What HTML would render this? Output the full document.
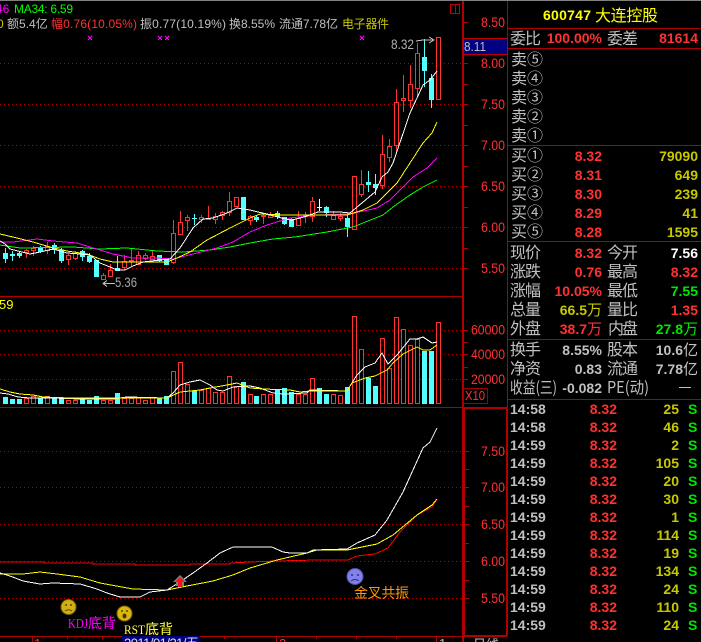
<!DOCTYPE html>
<html><head><meta charset="utf-8"><style>
html,body{margin:0;padding:0;background:#000;width:701px;height:642px;overflow:hidden}
svg{display:block;position:absolute;left:0;top:0}
text{font-family:"Liberation Sans","WenQuanYi Zen Hei","Noto Sans CJK SC",sans-serif}
.cj{font-family:"WenQuanYi Zen Hei","Noto Sans CJK SC",sans-serif;font-size:16px;fill:#c0c0c0}
.n{font-size:14px;font-weight:bold;text-anchor:end}
.ax{font-size:13.5px;fill:#ff3232;text-anchor:end}
.h{font-size:12px}
.r{fill:#ff3232}.g{fill:#00e600}.y{fill:#c8c800}.w{fill:#c0c0c0}
.tm{font-size:14px;font-weight:bold;fill:#c0c0c0}
</style></head><body>
<svg width="701" height="642" viewBox="0 0 701 642" xmlns="http://www.w3.org/2000/svg" shape-rendering="crispEdges">
<rect width="701" height="642" fill="#000"/>
<rect width="701" height="1" fill="#808080"/>

<!-- dotted grid -->
<path fill="none" stroke="#c00000" stroke-width="1" stroke-dasharray="1 3" d="M0 63.5H462M0 104.5H462M0 145.5H462M0 186.5H462M0 227.5H462M0 268.5H462M0 330.5H462M0 354.5H462M0 379.5H462M0 451.5H462M0 487.5H462M0 524.5H462M0 561.5H462M0 598.5H462"/>

<!-- frame -->
<path fill="none" stroke="#b00000" stroke-width="1" d="M0 296.5H462M0 407.5H508M0 636.5H507M464.5 408.5H506.5V635.5H464.5z"/>
<path fill="none" stroke="#b00000" stroke-width="2" d="M463 1V642"/>
<path fill="none" stroke="#b00000" stroke-width="1" d="M507.5 1V636M508 28.5H701M508 48.5H701M508 145.5H701M508 241.5H701M508 339.5H701M508 399.5H701"/>
<!-- axis ticks -->
<path fill="none" stroke="#b00000" stroke-width="1" d="M464 22.5h4M464 43.5h4M464 63.5h4M464 84.5h4M464 104.5h4M464 125.5h4M464 145.5h4M464 166.5h4M464 186.5h4M464 207.5h4M464 227.5h4M464 248.5h4M464 268.5h4M464 330.5h4M464 342.5h4M464 354.5h4M464 367.5h4M464 379.5h4M465 451.5h4M465 469.5h4M465 487.5h4M465 506.5h4M465 524.5h4M465 543.5h4M465 561.5h4M465 580.5h4M465 598.5h4M32.5 636v6M67.5 636v3M102.5 636v3M224.5 636v3M276.5 636v6M316.5 636v3M356.5 636v3M396.5 636v3M436.5 636v6"/>
<!-- window icon -->
<path fill="none" stroke="#c00000" d="M450.5 4.5h9v9h-9zM455.5 4.5v9"/>

<!-- main candles: wicks -->
<path fill="none" stroke="#ff3232" d="M26.5 249V258M33.5 246V256M47.5 242V254M68.5 254V265M75.5 251V260M103.5 273V279M110.5 264V277M124.5 255V270M131.5 249V266M138.5 251V265M145.5 253V260M152.5 251V260M173.5 220V264M180.5 211V235M187.5 215V231M201.5 215V223M208.5 206V219M215.5 213V224M222.5 211V220M229.5 192V216M250.5 215V225M263.5 213V224M270.5 212V218M298.5 211V226M305.5 212V223M312.5 197V222M333.5 211V220M340.5 213V221M361.5 170V197M382.5 135V189M389.5 139V162M396.5 89V153M403.5 75V112M410.5 65V108M417.5 43V97"/>
<path fill="#000" stroke="#ff3232" d="M24.5 250.5h4V252.5h-4zM31.5 248.5h4V250.5h-4zM45.5 246.5h4V250.5h-4zM66.5 255.5h4V259.5h-4zM73.5 253.5h4V258.5h-4zM101.5 275.5h4V279.5h-4zM108.5 270.5h4V276.5h-4zM122.5 261.5h4V267.5h-4zM129.5 260.5h4V261.5h-4zM136.5 255.5h4V264.5h-4zM143.5 255.5h4V258.5h-4zM150.5 256.5h4V259.5h-4zM171.5 233.5h4V262.5h-4zM178.5 222.5h4V234.5h-4zM185.5 217.5h4V220.5h-4zM199.5 217.5h4V219.5h-4zM206.5 218.5h4V219.5h-4zM213.5 216.5h4V219.5h-4zM220.5 212.5h4V215.5h-4zM227.5 201.5h4V212.5h-4zM234.5 197.5h4V206.5h-4zM248.5 216.5h4V220.5h-4zM261.5 215.5h4V216.5h-4zM268.5 215.5h4V217.5h-4zM296.5 218.5h4V225.5h-4zM303.5 215.5h4V216.5h-4zM310.5 201.5h4V216.5h-4zM331.5 215.5h4V219.5h-4zM338.5 216.5h4V218.5h-4zM352.5 176.5h4V229.5h-4zM359.5 184.5h4V194.5h-4zM380.5 154.5h4V185.5h-4zM387.5 146.5h4V157.5h-4zM394.5 102.5h4V145.5h-4zM401.5 98.5h4V100.5h-4zM408.5 84.5h4V100.5h-4zM415.5 53.5h4V88.5h-4zM436.5 37.5h4V99.5h-4z"/>
<path fill="none" stroke="#54ffff" d="M5.5 248V263M12.5 251V261M19.5 251V258M40.5 246V253M54.5 243V254M61.5 248V263M82.5 250V261M89.5 253V263M117.5 256V271M159.5 255V262M166.5 258V265M194.5 214V225M256.5 215V222M277.5 211V219M284.5 217V225M291.5 218V227M326.5 206V217M347.5 213V237M368.5 171V192M375.5 174V195M424.5 39V87M431.5 74V108"/>
<path fill="#54ffff" d="M3 253h5v6h-5zM10 254h5v2h-5zM17 253h5v3h-5zM38 247h5v5h-5zM52 245h5v5h-5zM59 250h5v11h-5zM80 251h5v6h-5zM87 256h5v6h-5zM94 260h5v17h-5zM115 268h5v3h-5zM157 255h5v6h-5zM164 259h5v6h-5zM192 218h5v1h-5zM241 197h5v23h-5zM254 217h5v3h-5zM275 213h5v4h-5zM282 217h5v7h-5zM289 219h5v8h-5zM324 207h5v6h-5zM345 218h5v9h-5zM366 182h5v3h-5zM373 184h5v4h-5zM422 57h5v14h-5zM429 78h5v22h-5z"/>
<path fill="none" stroke="#fff" d="M319.5 199V211M317 207.5h5"/>

<!-- main MAs -->
<g fill="none" stroke-width="1">
<polyline stroke="#00ff00" points="0,245 20,248 73,247 100,249 127,248 157,251 183,252 210,250 230,247 250,243 273,239 295,237 327,232 353,227 383,215 393,207 410,195 423,187 437,180"/>
<polyline stroke="#ff00ff" points="0,242 13,242 37,239 53,241 77,243 93,248 113,254 133,258 157,258 173,259 193,254 217,248 233,242 250,232 267,225 290,218 317,215 350,214 377,208 390,200 413,177 427,168 437,158"/>
<polyline stroke="#ffff00" points="0,234 17,238 33,242 50,247 67,251 87,254 100,259 113,262 140,262 167,262 177,258 190,252 207,240 230,228 250,218 260,214 283,215 347,215 363,210 377,203 397,183 410,163 423,143 432,133 437,122"/>
<polyline stroke="#ffffff" points="0,241 5,244 10,249 30,254 40,252 53,249 67,253 80,254 90,255 100,263 110,267 117,270 125,270 133,266 143,262 160,260 170,259 180,248 193,228 203,219 213,218 227,213 237,208 250,210 258,212 267,214 285,219 292,220 304,217 318,212 340,212 350,213 375,192 382,177 388,172 393,163 410,113 423,85 430,80 437,71"/>
<path stroke="#c0c0c0" d="M416 41L423 40H434M429 37l5 3-5 3"/>
<path stroke="#c0c0c0" d="M103 283.5H115M107 280.5l-4 3 4 3"/>
</g>
<path fill="none" stroke="#ff00ff" d="M88 36l4 4M92 36l-4 4M158 36l4 4M162 36l-4 4M165 36l4 4M169 36l-4 4M360 36l4 4M364 36l-4 4"/>

<!-- volume -->
<path fill="#000" stroke="#ff3232" d="M24.5 398.5h4V403.5h-4zM31.5 396.5h4V403.5h-4zM45.5 396.5h4V403.5h-4zM66.5 400.5h4V403.5h-4zM73.5 400.5h4V403.5h-4zM101.5 400.5h4V403.5h-4zM108.5 400.5h4V403.5h-4zM122.5 398.5h4V403.5h-4zM129.5 398.5h4V403.5h-4zM136.5 397.5h4V403.5h-4zM143.5 400.5h4V403.5h-4zM150.5 397.5h4V403.5h-4zM171.5 371.5h4V403.5h-4zM178.5 362.5h4V403.5h-4zM185.5 384.5h4V403.5h-4zM199.5 390.5h4V403.5h-4zM206.5 388.5h4V403.5h-4zM213.5 392.5h4V403.5h-4zM220.5 392.5h4V403.5h-4zM227.5 376.5h4V403.5h-4zM234.5 386.5h4V403.5h-4zM248.5 394.5h4V403.5h-4zM261.5 394.5h4V403.5h-4zM268.5 394.5h4V403.5h-4zM296.5 394.5h4V403.5h-4zM303.5 394.5h4V403.5h-4zM310.5 378.5h4V403.5h-4zM331.5 394.5h4V403.5h-4zM338.5 395.5h4V403.5h-4zM352.5 316.5h4V403.5h-4zM359.5 349.5h4V403.5h-4zM380.5 338.5h4V403.5h-4zM387.5 368.5h4V403.5h-4zM394.5 317.5h4V403.5h-4zM401.5 329.5h4V403.5h-4zM408.5 345.5h4V403.5h-4zM415.5 339.5h4V403.5h-4zM436.5 322.5h4V403.5h-4z"/>
<path fill="#54ffff" d="M3 397h5V404h-5zM10 399h5V404h-5zM17 399h5V404h-5zM38 398h5V404h-5zM52 398h5V404h-5zM59 398h5V404h-5zM80 399h5V404h-5zM87 400h5V404h-5zM94 396h5V404h-5zM115 393h5V404h-5zM157 398h5V404h-5zM164 396h5V404h-5zM192 391h5V404h-5zM241 382h5V404h-5zM254 396h5V404h-5zM275 390h5V404h-5zM282 388h5V404h-5zM289 392h5V404h-5zM317 388h5V404h-5zM324 394h5V404h-5zM345 387h5V404h-5zM366 378h5V404h-5zM373 386h5V404h-5zM422 351h5V404h-5zM429 351h5V404h-5z"/>
<g fill="none">
<polyline stroke="#fff" points="0,393 8,394 18,397 30,398 43,398 53,398 80,399 113,399 127,397 167,398 173,393 180,385 190,382 200,380 210,385 217,390 223,391 233,387 250,386 260,388 273,393 283,394 307,393 310,390 347,391 350,386 357,375 365,367 375,363 382,353 388,364 397,355 410,339 417,339 423,337 432,343 437,342"/>
<polyline stroke="#ffff00" points="0,389 10,392 20,394 33,395 43,397 70,398 167,398 180,392 200,390 210,388 227,385 237,383 250,388 263,389 290,390 300,392 310,391 347,391 352,383 365,378 375,376 387,370 393,363 403,354 417,347 423,350 430,350 437,345"/>
</g>

<!-- bottom indicator -->
<g fill="none">
<polyline stroke="#ff0000" points="0,562 44,562 44,563 93,563 93,564 135,564 135,565 190,565 190,564 230,564 230,563 250,562 277,561 317,560 348,560 357,556 375,554 388,548 400,532 417,515 432,507 437,499"/>
<polyline stroke="#ffff00" points="0,574 23,574 40,572 57,574 80,577 100,583 133,589 167,590 187,586 213,581 233,575 250,568 277,560 307,553 317,550 347,550 377,544 393,535 417,515 432,505 437,499"/>
<polyline stroke="#ffffff" points="0,573 10,576 23,581 40,584 53,583 80,584 97,589 107,593 120,597 140,597 150,592 167,590 180,582 193,573 207,563 220,553 233,547 272,547 283,552 290,553 307,553 313,550 347,549 357,543 375,535 387,520 403,492 423,448 430,442 437,428"/>
</g>

<!-- arrow marker -->
<g shape-rendering="auto">
<path fill="#808080" d="M180 575l7 7h-3v4h-8v-4h-3z"/>
<path fill="#ff1010" d="M180 577l5 5h-3v5h-4v-5h-3z"/>
<!-- faces -->
<circle cx="68.5" cy="607" r="7.5" fill="#d0b010" stroke="#806000"/>
<circle cx="66" cy="605" r="1" fill="#604000"/><circle cx="71" cy="605" r="1" fill="#604000"/>
<path d="M65 611q3.500-2.500 7 0" fill="none" stroke="#604000"/>
<circle cx="124.500" cy="613.500" r="7.500" fill="#d8b810" stroke="#806000"/>
<circle cx="122" cy="611" r="1" fill="#604000"/><circle cx="127" cy="611" r="1" fill="#604000"/>
<ellipse cx="124.500" cy="616" rx="2" ry="2.500" fill="#503000"/>
<circle cx="355" cy="576.500" r="8" fill="#8080f0" stroke="#5050a0"/>
<circle cx="352" cy="575" r="1" fill="#303060"/><circle cx="358" cy="575" r="1" fill="#303060"/>
<path d="M351 581q4-3 8 0" fill="none" stroke="#303060"/>
</g>

<!-- top header -->
<text x="-4" y="13" class="h" fill="#ff00ff">46</text>
<text x="14" y="13" class="h" fill="#00ff00" textLength="59">MA34: 6.59</text>
<text x="-3" y="28" class="h" fill="#c8c800">0</text>
<text x="7" y="28" class="h" fill="#c0c0c0">额<tspan>5.4</tspan>亿</text>
<text x="51" y="28" class="h" fill="#ff3232" textLength="86">幅0.76(10.05%)</text>
<text x="140" y="28" class="h" fill="#c0c0c0" textLength="86">振0.77(10.19%)</text>
<text x="229" y="28" class="h" fill="#c0c0c0" textLength="46">换8.55%</text>
<text x="279" y="28" class="h" fill="#c0c0c0" textLength="59">流通7.78亿</text>
<text x="342" y="28" class="h" fill="#c8c800" textLength="47">电子器件</text>

<text x="391" y="49" font-size="13.500" fill="#b0b0b0" textLength="23" lengthAdjust="spacingAndGlyphs">8.32</text>
<text x="115" y="287" font-size="14" fill="#a8a8a8" textLength="22" lengthAdjust="spacingAndGlyphs">5.36</text>
<text x="-1" y="309" font-size="13" fill="#ffff00">59</text>

<!-- axis -->
<text x="505" y="27" class="ax" textLength="24" lengthAdjust="spacingAndGlyphs">8.50</text>
<text x="505" y="68" class="ax" textLength="24" lengthAdjust="spacingAndGlyphs">8.00</text>
<text x="505" y="109" class="ax" textLength="24" lengthAdjust="spacingAndGlyphs">7.50</text>
<text x="505" y="150" class="ax" textLength="24" lengthAdjust="spacingAndGlyphs">7.00</text>
<text x="505" y="191" class="ax" textLength="24" lengthAdjust="spacingAndGlyphs">6.50</text>
<text x="505" y="232" class="ax" textLength="24" lengthAdjust="spacingAndGlyphs">6.00</text>
<text x="505" y="273" class="ax" textLength="24" lengthAdjust="spacingAndGlyphs">5.50</text>
<text x="505" y="334.500" class="ax" textLength="34" lengthAdjust="spacingAndGlyphs">60000</text>
<text x="505" y="359" class="ax" textLength="34" lengthAdjust="spacingAndGlyphs">40000</text>
<text x="505" y="384" class="ax" textLength="34" lengthAdjust="spacingAndGlyphs">20000</text>
<text x="505" y="456" class="ax" textLength="24" lengthAdjust="spacingAndGlyphs">7.50</text>
<text x="505" y="492" class="ax" textLength="24" lengthAdjust="spacingAndGlyphs">7.00</text>
<text x="505" y="529" class="ax" textLength="24" lengthAdjust="spacingAndGlyphs">6.50</text>
<text x="505" y="566" class="ax" textLength="24" lengthAdjust="spacingAndGlyphs">6.00</text>
<text x="505" y="603" class="ax" textLength="24" lengthAdjust="spacingAndGlyphs">5.50</text>
<rect x="463.500" y="38.500" width="44" height="16" fill="#000080" stroke="#c00000"/>
<text x="464" y="51" font-size="13" fill="#c0c0c0" textLength="22" lengthAdjust="spacingAndGlyphs">8.11</text>
<rect x="463.500" y="388.500" width="24" height="15" fill="#000" stroke="#a00000"/>
<text x="465" y="400" font-size="13" fill="#ff3232" textLength="20" lengthAdjust="spacingAndGlyphs">X10</text>

<!-- signal labels -->
<text x="68" y="628" style="font-family:'Liberation Serif',serif" font-size="14" fill="#ff00ff" textLength="20" lengthAdjust="spacingAndGlyphs">KDJ</text>
<text x="88" y="628" class="cj" style="fill:#ff00ff;font-size:14px">底背</text>
<text x="124" y="634" style="font-family:'Liberation Serif',serif" font-size="13" fill="#ffff40" textLength="21" lengthAdjust="spacingAndGlyphs">RST</text>
<text x="145" y="634" class="cj" style="fill:#ffff40;font-size:14px">底背</text>
<text x="354" y="598" class="cj" style="fill:#ff9900;font-size:14px" textLength="55">金叉共振</text>

<!-- bottom strip -->
<rect x="122.500" y="636.500" width="77" height="8" fill="#000080" stroke="#000080"/>
<text x="124" y="647.500" font-size="13" fill="#e0e0e0" textLength="75">2011/01/21/五</text>
<text x="473" y="649" class="cj" style="font-size:13px">日线</text>
<text x="34" y="648" font-size="13" fill="#ff3232">1</text>
<text x="279" y="648" font-size="13" fill="#ff3232">2</text>
<text x="439" y="648" font-size="13" fill="#c0c0c0">1</text>

<!-- right panel -->
<text x="543" y="20" font-size="14" font-weight="bold" fill="#ffff00" textLength="48">600747</text>
<text x="595" y="21" class="cj" style="fill:#ffff00;font-size:16px" textLength="63">大连控股</text>

<text x="510" y="44" class="cj" textLength="31">委比</text>
<text x="602" y="43" class="n r">100.00%</text>
<text x="607" y="44" class="cj" textLength="31">委差</text>
<text x="698" y="43" class="n r">81614</text>

<text x="511" y="65" class="cj">卖⑤</text>
<text x="511" y="84" class="cj">卖④</text>
<text x="511" y="103" class="cj">卖③</text>
<text x="511" y="122" class="cj">卖②</text>
<text x="511" y="141" class="cj">卖①</text>
<text x="511" y="161" class="cj">买①</text>
<text x="511" y="180" class="cj">买②</text>
<text x="511" y="199" class="cj">买③</text>
<text x="511" y="218" class="cj">买④</text>
<text x="511" y="237" class="cj">买⑤</text>
<text x="602" y="161" class="n r">8.32</text><text x="698" y="161" class="n y">79090</text>
<text x="602" y="180" class="n r">8.31</text><text x="698" y="180" class="n y">649</text>
<text x="602" y="199" class="n r">8.30</text><text x="698" y="199" class="n y">239</text>
<text x="602" y="218" class="n r">8.29</text><text x="698" y="218" class="n y">41</text>
<text x="602" y="237" class="n r">8.28</text><text x="698" y="237" class="n y">1595</text>

<text x="510" y="258" class="cj" textLength="31">现价</text><text x="602" y="258" class="n r">8.32</text>
<text x="607" y="258" class="cj" textLength="31">今开</text><text x="698" y="258" class="n" fill="#fff">7.56</text>
<text x="510" y="277" class="cj" textLength="31">涨跌</text><text x="602" y="277" class="n r">0.76</text>
<text x="607" y="277" class="cj" textLength="31">最高</text><text x="698" y="277" class="n r">8.32</text>
<text x="510" y="296" class="cj" textLength="31">涨幅</text><text x="602" y="296" class="n r">10.05%</text>
<text x="607" y="296" class="cj" textLength="31">最低</text><text x="698" y="296" class="n g">7.55</text>
<text x="510" y="315" class="cj" textLength="31">总量</text><text x="587" y="315" class="n y">66.5</text><text x="587" y="315" class="cj" style="fill:#c8c800;font-size:15px">万</text>
<text x="607" y="315" class="cj" textLength="31">量比</text><text x="698" y="315" class="n r">1.35</text>
<text x="510" y="334" class="cj" textLength="31">外盘</text><text x="587" y="334" class="n r">38.7</text><text x="587" y="334" class="cj" style="fill:#ff3232;font-size:15px">万</text>
<text x="608" y="334" class="cj" textLength="30">内盘</text><text x="683" y="334" class="n g">27.8</text><text x="683" y="334" class="cj" style="fill:#00e600;font-size:15px">万</text>

<text x="510" y="355" class="cj" textLength="31">换手</text><text x="602" y="355" class="n w">8.55%</text>
<text x="607" y="355" class="cj" textLength="31">股本</text><text x="683" y="355" class="n w">10.6</text><text x="683" y="355" class="cj" style="font-size:15px">亿</text>
<text x="510" y="374" class="cj" textLength="31">净资</text><text x="602" y="374" class="n w">0.83</text>
<text x="607" y="374" class="cj" textLength="31">流通</text><text x="683" y="374" class="n w">7.78</text><text x="683" y="374" class="cj" style="font-size:15px">亿</text>
<text x="510" y="393" class="cj" textLength="47" lengthAdjust="spacingAndGlyphs">收益(三)</text><text x="602" y="393" class="n w">-0.082</text>
<text x="607" y="393" class="cj" textLength="42" lengthAdjust="spacingAndGlyphs">PE(动)</text>
<rect x="679" y="387" width="12" height="1" fill="#c0c0c0"/>

<!-- trades -->
<text x="510" y="414" class="tm">14:58</text><text x="617" y="414" class="n r">8.32</text><text x="679" y="414" class="n y">25</text><text x="688" y="414" class="n g" style="text-anchor:start">S</text>
<text x="510" y="432" class="tm">14:58</text><text x="617" y="432" class="n r">8.32</text><text x="679" y="432" class="n y">46</text><text x="688" y="432" class="n g" style="text-anchor:start">S</text>
<text x="510" y="450" class="tm">14:59</text><text x="617" y="450" class="n r">8.32</text><text x="679" y="450" class="n y">2</text><text x="688" y="450" class="n g" style="text-anchor:start">S</text>
<text x="510" y="468" class="tm">14:59</text><text x="617" y="468" class="n r">8.32</text><text x="679" y="468" class="n y">105</text><text x="688" y="468" class="n g" style="text-anchor:start">S</text>
<text x="510" y="486" class="tm">14:59</text><text x="617" y="486" class="n r">8.32</text><text x="679" y="486" class="n y">20</text><text x="688" y="486" class="n g" style="text-anchor:start">S</text>
<text x="510" y="504" class="tm">14:59</text><text x="617" y="504" class="n r">8.32</text><text x="679" y="504" class="n y">30</text><text x="688" y="504" class="n g" style="text-anchor:start">S</text>
<text x="510" y="522" class="tm">14:59</text><text x="617" y="522" class="n r">8.32</text><text x="679" y="522" class="n y">1</text><text x="688" y="522" class="n g" style="text-anchor:start">S</text>
<text x="510" y="540" class="tm">14:59</text><text x="617" y="540" class="n r">8.32</text><text x="679" y="540" class="n y">114</text><text x="688" y="540" class="n g" style="text-anchor:start">S</text>
<text x="510" y="558" class="tm">14:59</text><text x="617" y="558" class="n r">8.32</text><text x="679" y="558" class="n y">19</text><text x="688" y="558" class="n g" style="text-anchor:start">S</text>
<text x="510" y="576" class="tm">14:59</text><text x="617" y="576" class="n r">8.32</text><text x="679" y="576" class="n y">134</text><text x="688" y="576" class="n g" style="text-anchor:start">S</text>
<text x="510" y="594" class="tm">14:59</text><text x="617" y="594" class="n r">8.32</text><text x="679" y="594" class="n y">24</text><text x="688" y="594" class="n g" style="text-anchor:start">S</text>
<text x="510" y="612" class="tm">14:59</text><text x="617" y="612" class="n r">8.32</text><text x="679" y="612" class="n y">110</text><text x="688" y="612" class="n g" style="text-anchor:start">S</text>
<text x="510" y="630" class="tm">14:59</text><text x="617" y="630" class="n r">8.32</text><text x="679" y="630" class="n y">24</text><text x="688" y="630" class="n g" style="text-anchor:start">S</text>
</svg>
</body></html>
